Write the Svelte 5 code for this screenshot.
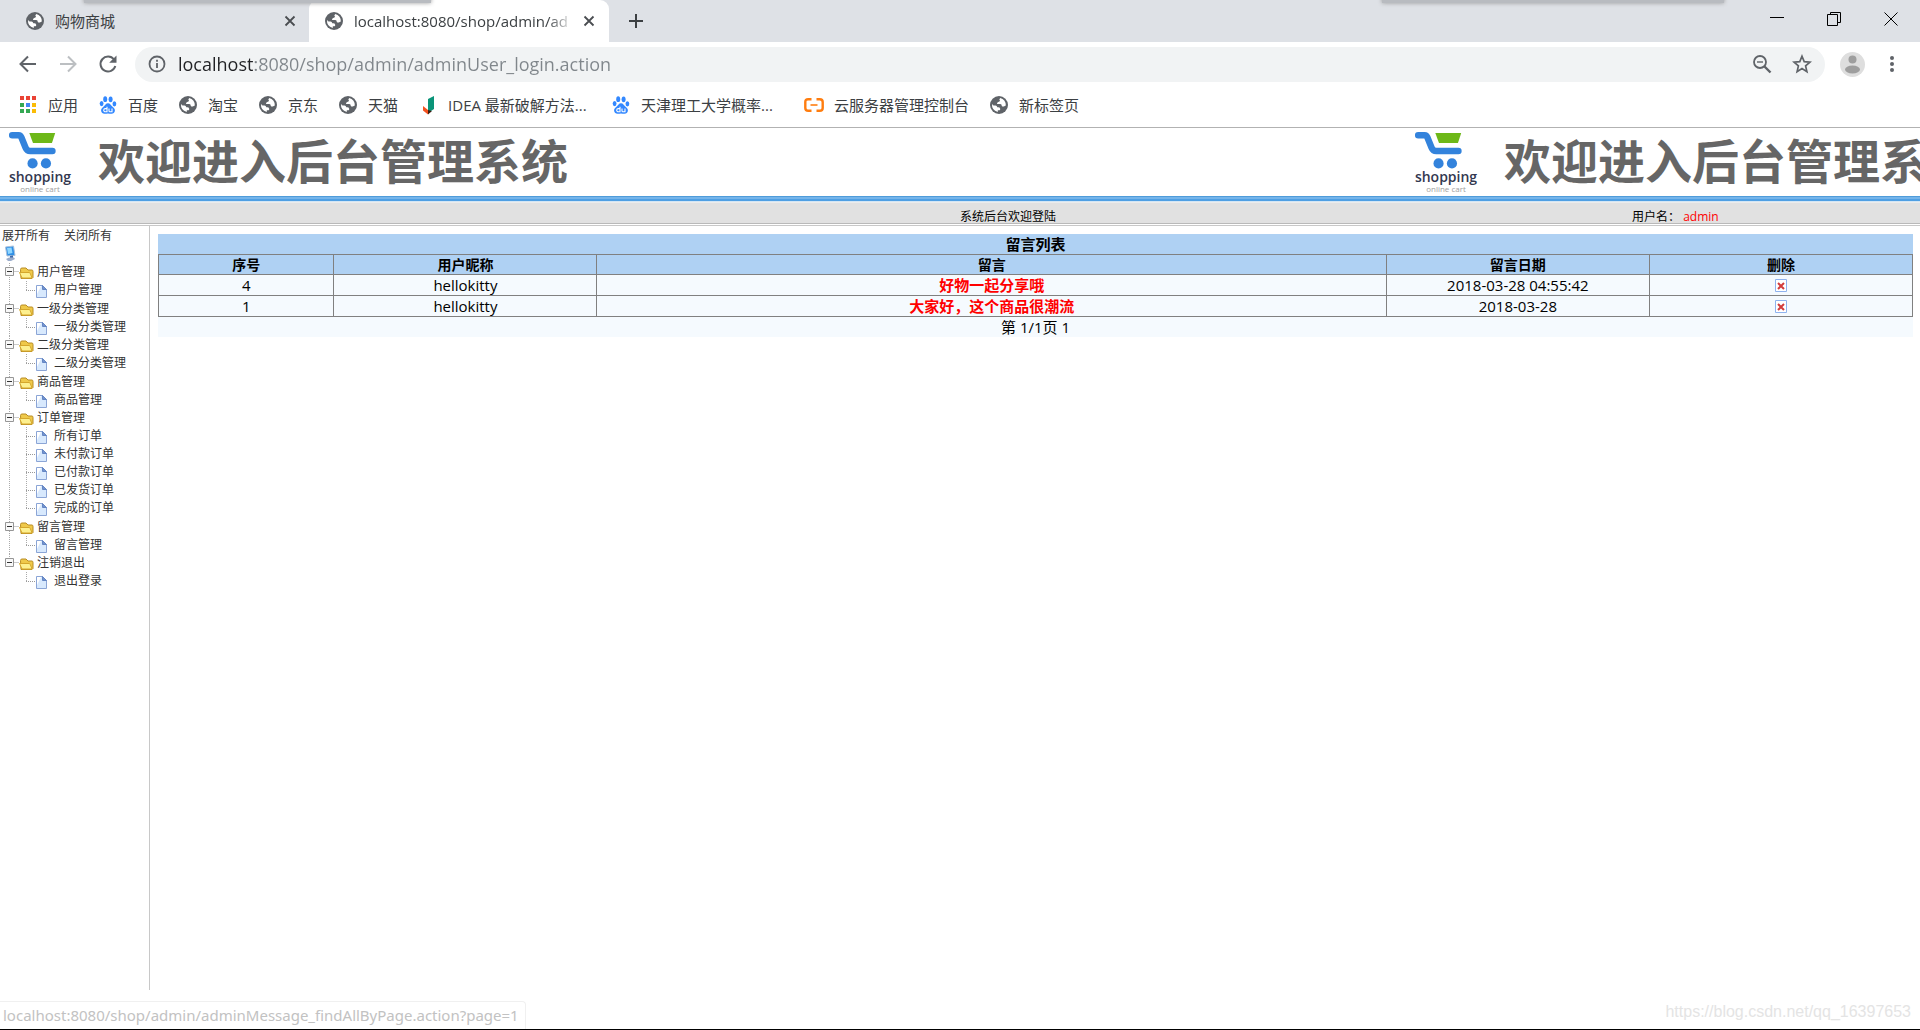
<script lang="ts">
	let url = $state('localhost:8080/shop/admin/adminUser_login.action');

	const bookmarks = [
		{ icon: 'apps', name: '应用' },
		{ icon: 'baidu', name: '百度' },
		{ icon: 'globe', name: '淘宝' },
		{ icon: 'globe', name: '京东' },
		{ icon: 'globe', name: '天猫' },
		{ icon: 'idea', name: 'IDEA 最新破解方法...', long: true },
		{ icon: 'baidu', name: '天津理工大学概率...', long: true },
		{ icon: 'aliyun', name: '云服务器管理控制台' },
		{ icon: 'globe', name: '新标签页' }
	];

	const menu = [
		{ name: '用户管理', items: ['用户管理'] },
		{ name: '一级分类管理', items: ['一级分类管理'] },
		{ name: '二级分类管理', items: ['二级分类管理'] },
		{ name: '商品管理', items: ['商品管理'] },
		{ name: '订单管理', items: ['所有订单', '未付款订单', '已付款订单', '已发货订单', '完成的订单'] },
		{ name: '留言管理', items: ['留言管理'] },
		{ name: '注销退出', items: ['退出登录'] }
	];

	let open = $state(menu.map(() => true));

	const messages = [
		{ id: 4, user: 'hellokitty', text: '好物一起分享哦', date: '2018-03-28 04:55:42' },
		{ id: 1, user: 'hellokitty', text: '大家好，这个商品很潮流', date: '2018-03-28' }
	];
</script>

{#snippet icon(name: string)}
	{#if name === 'globe'}
		<svg class="icon" viewBox="0 0 20 20">
			<circle cx="10" cy="10" r="9" fill="#5f6368" />
			<path d="M11.200 3q-1.700 1.500-.2 2.600-.2 1.400-1.800 1.400-1.300.4-1.200 1.900h3.200q1.700.2 1.600 2 .7 1 2 .5l2-.8A7 7 0 0 0 11.200 3zM3 9q-.5 6 5.800 8v-1.700h1.800q.8-.6.6-1.600-.4-1.400-2-1.400H8.300q-.3-1.900-1.800-1.900H4.500z" fill="#fff" />
		</svg>
	{:else if name === 'baidu'}
		<svg class="icon" viewBox="0 0 20 20" fill="#3388ff">
			<ellipse cx="7.200" cy="4.200" rx="2" ry="2.900" />
			<ellipse cx="12.600" cy="4.300" rx="2" ry="2.900" />
			<ellipse cx="3.600" cy="8.600" rx="1.900" ry="2.600" />
			<ellipse cx="16.400" cy="8.800" rx="1.900" ry="2.600" />
			<path d="M10 8.200c-2.200 0-2.900 2-4.300 3.200-1.600 1.300-2.800 2.400-2.600 4.400.2 2.100 1.800 3.100 3.600 3 1.300-.1 2.200-.4 3.300-.4s2 .3 3.300.4c1.800.1 3.400-.9 3.600-3 .2-2-1-3.100-2.600-4.400C12.900 10.200 12.200 8.200 10 8.200z" />
			<path d="M9 11.800v5H7.300a1.500 1.500 0 0 1 0-3.200H9M11 13.500v2.200c0 .7.400 1.100 1 1.100h2v-3.300" fill="none" stroke="#fff" stroke-width="1.100" />
		</svg>
	{:else if name === 'apps'}
		<svg class="icon" viewBox="0 0 20 20">
			<path d="M2 1h4v4H2zM8 1h4v4H8zM14 1h4v4h-4z" fill="#ea4335" />
			<path d="M2 8h4v4H2zM2 14h4v4H2zM8 14h4v4H8z" fill="#34a853" />
			<path d="M8 8h4v4H8z" fill="#4285f4" />
			<path d="M14 8h4v4h-4zM14 14h4v4h-4z" fill="#fbbc05" />
		</svg>
	{:else if name === 'idea'}
		<svg class="icon" viewBox="0 0 20 20">
			<path d="M10 4l6-3v13l-6 4z" fill="#0b9479" />
			<path d="M5 11l5 4v4.500l-5-4z" fill="#f4511e" />
			<path d="M10 15l4 1-4 3.500z" fill="#3a1d10" />
		</svg>
	{:else}
		<svg class="icon" viewBox="0 0 20 20" fill="none" stroke="#ff7d0f">
			<path d="M7.500 4.200H4.200Q1.300 4.200 1.300 7v6q0 2.800 2.900 2.800h3.300M12.500 4.200h3.300q2.900 0 2.900 2.800v6q0 2.800-2.900 2.800h-3.300" stroke-width="2.400" />
			<path d="M6.500 10h7" stroke-width="1.600" />
		</svg>
	{/if}
{/snippet}

{#snippet cross()}
	<svg class="cross" viewBox="0 0 12 12"><path d="M1.500 1.500l9 9M10.500 1.500l-9 9" stroke="#4a4d51" stroke-width="1.800" /></svg>
{/snippet}

{#snippet banner()}
	<div class="banner">
		<div class="logo">
			<svg viewBox="0 0 52 40">
				<path d="M22 1h28l-3.500 11H26z" fill="#6db818" />
				<path d="M3.500 3.500h7q2 0 3 2.500l4.500 11q1.500 3.500 5 3.500h24" fill="none" stroke="#3383dc" stroke-width="7" stroke-linecap="round" stroke-linejoin="round" />
				<circle cx="25.500" cy="34" r="5.500" fill="#3383dc" />
				<circle cx="40" cy="34" r="5.500" fill="#3383dc" />
			</svg>
			<strong>shopping</strong>
			<small>online cart</small>
		</div>
		<h1>欢迎进入后台管理系统</h1>
	</div>
{/snippet}

<div class="window">
	<header class="tabs">
		<div class="shade shade-left"></div>
		<div class="shade shade-right"></div>
		<div class="tab">
			{@render icon('globe')}
			<span class="tab-name">购物商城</span>
			<button aria-label="关闭标签页">{@render cross()}</button>
		</div>
		<div class="tab active">
			{@render icon('globe')}
			<span class="tab-name fade">localhost:8080/shop/admin/ad</span>
			<button aria-label="关闭标签页">{@render cross()}</button>
		</div>
		<button class="new-tab" aria-label="新标签页">
			<svg width="16" height="16" viewBox="0 0 16 16"><path d="M8 1v14M1 8h14" stroke="#3c4043" stroke-width="2" /></svg>
		</button>
		<div class="controls">
			<button aria-label="最小化"><svg viewBox="0 0 14 14"><path d="M0 5.500h14" /></svg></button>
			<button aria-label="还原"><svg viewBox="0 0 14 14"><path d="M.5 2.500h10v11H.5zM3.500 2.500v-2h10v10h-3" /></svg></button>
			<button aria-label="关闭"><svg viewBox="0 0 14 14"><path d="M.5.5l13 13M13.500.5l-13 13" /></svg></button>
		</div>
	</header>

	<div class="toolbar">
		<button class="nav" aria-label="后退">
			<svg width="20" height="20" viewBox="0 0 20 20"><path d="M18 10H3M10 2.500L2.500 10l7.500 7.500" stroke="#5f6368" /></svg>
		</button>
		<button class="nav" aria-label="前进">
			<svg width="20" height="20" viewBox="0 0 20 20"><path d="M2 10h15M10 2.500l7.500 7.500-7.500 7.500" stroke="#bcbfc2" /></svg>
		</button>
		<button class="nav" aria-label="刷新">
			<svg width="20" height="20" viewBox="0 0 20 20"><path d="M16 5.500A7.500 7.500 0 1 0 17.300 12" stroke="#5f6368" /><path d="M18.500 1.500v7.300h-7.300z" fill="#5f6368" /></svg>
		</button>
		<div class="address">
			<svg width="18" height="18" viewBox="0 0 18 18" fill="none" stroke="#5f6368" stroke-width="1.800"><circle cx="9" cy="9" r="7.500" /><path d="M9 8v5M9 4.800v2" /></svg>
			<input aria-label="地址" bind:value={url} />
			<button aria-label="缩放">
				<svg width="20" height="20" viewBox="0 0 20 20" fill="none" stroke="#5f6368" stroke-width="1.800"><circle cx="8" cy="8" r="6" /><path d="M12.500 12.500l6 6" stroke-width="2.400" /><path d="M5 8h6" stroke-width="1.400" /></svg>
			</button>
			<button aria-label="收藏">
				<svg width="20" height="20" viewBox="0 0 20 20" fill="none" stroke="#5f6368" stroke-width="1.700"><path d="M10 2.200l2.200 5.400 5.800.5-4.400 3.800 1.300 5.700-4.900-3-4.900 3 1.300-5.700L2 8.100l5.800-.5z" /></svg>
			</button>
		</div>
		<button class="avatar" aria-label="用户">
			<svg width="25" height="25" viewBox="0 0 25 25"><circle cx="12.500" cy="12.500" r="12.500" fill="#dedede" /><circle cx="12.500" cy="7.500" r="4" fill="#9e9e9e" /><ellipse cx="12.500" cy="17.500" rx="7.500" ry="4" fill="#9e9e9e" /></svg>
		</button>
		<button class="more" aria-label="菜单">
			<svg width="20" height="20" viewBox="0 0 20 20" fill="#5f6368"><circle cx="10" cy="4" r="2" /><circle cx="10" cy="10" r="2" /><circle cx="10" cy="16" r="2" /></svg>
		</button>
	</div>

	<nav class="bookmarks">
		{#each bookmarks as mark}
			<a href="#top">{@render icon(mark.icon)}<span class:long={mark.long}>{mark.name}</span></a>
		{/each}
	</nav>

	<div class="banners">
		{@render banner()}
		{@render banner()}
	</div>
	<div class="blue"></div>
	<div class="welcome">
		<span>系统后台欢迎登陆</span>
		<span class="login">用户名： <b>admin</b></span>
	</div>

	<div class="frames">
		<aside>
			<div class="toggle">
				<a href="#open" onclick={() => (open = menu.map(() => true))}>展开所有</a>
				<a href="#close" onclick={() => (open = menu.map(() => false))}>关闭所有</a>
			</div>
			<div class="root">
				<svg width="14" height="17" viewBox="0 0 14 17">
					<path d="M1.500 2L9.500 1l1.500 9.500-8 .5z" fill="#2f8fe6" stroke="#a9c0da" />
					<path d="M3 3l4.500-.5 1 5.500-4.500 1z" fill="#8fd6ff" />
					<path d="M6 11l3-.5v3H6z" fill="#3f68a8" />
					<path d="M2 14l3-1.500h5l1 1.500-4 2H4z" fill="#9aaccb" />
				</svg>
			</div>
			<ul>
				{#each menu as group, i}
					<li class="group">
						<button class="folder" onclick={() => (open[i] = !open[i])}>
							<svg width="36" height="18" viewBox="0 0 36 18">
								<path d="M13.500 8.500h5" stroke="#999" stroke-dasharray="1 1" />
								<path d="M5.500 4.500h8v8h-8z" fill="#f8f8f8" stroke="#969696" />
								<path d="M7 8.500h5" stroke="#333" />
								<path d="M20.500 6.500q0-1.500 1.500-1.500h4l2 2h4q1 0 1 1.500v6l-1 1H21z" fill="#efc94a" stroke="#b98d25" />
								<path d="M19.500 9.500h9.500q1 0 1.300 1l1.700 4.500H22z" fill="#fdf08f" stroke="#d5a72c" />
								{#if !open[i]}<path d="M9.500 6v5" stroke="#333" />{/if}
							</svg>
							<span>{group.name}</span>
						</button>
						{#if open[i]}
							<ul>
								{#each group.items as item}
									<li class="leaf">
										<a href="#page">
											<svg width="24" height="18" viewBox="0 0 24 18">
												<path d="M2 9.500h10" stroke="#999" stroke-dasharray="1 1" />
												<path d="M12.500 4.500h6l4 4v8h-10z" fill="#d8e9fd" stroke="#8ba5d6" />
												<path d="M13 5h4l-4 8z" fill="#fff" />
												<path d="M18.500 4.500v4h4z" fill="#7393cd" stroke="#6486c4" />
											</svg>
											<span>{item}</span>
										</a>
									</li>
								{/each}
							</ul>
						{/if}
					</li>
				{/each}
			</ul>
		</aside>

		<main>
			<table>
				<caption>留言列表</caption>
				<thead>
					<tr>
						<th class="w10">序号</th>
						<th class="w15">用户昵称</th>
						<th>留言</th>
						<th class="w15">留言日期</th>
						<th class="w15">删除</th>
					</tr>
				</thead>
				<tbody>
					{#each messages as message}
						<tr>
							<td>{message.id}</td>
							<td>{message.user}</td>
							<td class="message">{message.text}</td>
							<td>{message.date}</td>
							<td>
								<button aria-label="删除">
									<svg width="12" height="13" viewBox="0 0 12 13"><path d="M.5.5h11v12H.5z" fill="#fff" stroke="#8eb2ee" /><path d="M3 4l6 6M9 4l-6 6" stroke="#d23c3c" stroke-width="2" /></svg>
								</button>
							</td>
						</tr>
					{/each}
				</tbody>
			</table>
			<div class="pager">第 1/1页 1</div>
		</main>
	</div>

	<footer>
		<div class="status">localhost:8080/shop/admin/adminMessage_findAllByPage.action?page=1</div>
		<div class="watermark">https://blog.csdn.net/qq_16397653</div>
	</footer>
</div>

<style>
:global(body) {
	margin: 0;
	background: #fff;
}

.window {
	display: flex;
	flex-direction: column;
	min-height: 100vh;
	overflow: hidden;
	font-family: "Open Sans", "Noto Sans CJK SC", sans-serif;
	font-size: 15px;
	color: #000;
}

.window * {
	box-sizing: border-box;
}

button {
	display: flex;
	align-items: center;
	justify-content: center;
	padding: 0;
	border: 0;
	background: none;
	font: inherit;
	color: inherit;
}

a {
	color: inherit;
	text-decoration: none;
}

svg {
	display: block;
	flex: none;
}

.icon {
	width: 20px;
	height: 20px;
}

/* tab strip */
.tabs {
	position: relative;
	display: flex;
	height: 42px;
	background: #dee1e6;
	color: #3c4043;
}

.shade {
	position: absolute;
	top: -4px;
	height: 7px;
	background: #b8bbc0;
	box-shadow: 0 0 4px #999;
}

.shade-left {
	left: 84px;
	width: 347px;
}

.shade-right {
	right: 196px;
	width: 342px;
}

.tab {
	display: flex;
	align-items: center;
	width: 309px;
	padding: 0 11px 0 25px;
}

.tab.active {
	width: 300px;
	padding: 0 12px 0 15px;
	border-radius: 9px 9px 0 0;
	background: #fff;
}

.tab-name {
	flex: 1;
	margin: 0 7px 0 10px;
	line-height: 20px;
	white-space: nowrap;
}

.fade {
	mask-image: linear-gradient(90deg, #000 88%, transparent 100%);
}

.tab button {
	width: 16px;
	height: 20px;
}

.cross {
	width: 12px;
	height: 12px;
}

.new-tab {
	width: 54px;
}

.controls {
	display: flex;
	align-items: flex-start;
	gap: 43px;
	margin-left: auto;
	padding: 12px 22px 0 0;
}

.controls svg {
	width: 14px;
	height: 14px;
	fill: none;
	stroke: #000;
}

/* toolbar */
.toolbar {
	display: flex;
	align-items: center;
	height: 44px;
	padding: 0 18px;
}

.nav {
	width: 20px;
	margin-right: 20px;
}

.nav svg {
	fill: none;
	stroke-width: 2;
}

.nav:nth-child(3) {
	margin-right: 17px;
}

.address {
	display: flex;
	flex: 1;
	align-items: center;
	gap: 20px;
	height: 35px;
	padding: 0 13px;
	border-radius: 18px;
	background: #f1f3f4;
}

input {
	flex: 1;
	min-width: 0;
	margin-left: -8px;
	padding: 0;
	border: 0;
	outline: 0;
	font: inherit;
	font-size: 18px;
	/* host part is darker than the rest of the url */
	background: linear-gradient(90deg, #202124 77px, #80868b 77px);
	background-clip: text;
	color: transparent;
}

.avatar {
	margin: 0 17px 0 15px;
}

/* bookmarks */
.bookmarks {
	display: flex;
	align-items: center;
	gap: 20px;
	height: 42px;
	padding: 0 18px 4px;
	border-bottom: 1px solid #b2b2b2;
	color: #3c4043;
	line-height: 20px;
	white-space: nowrap;
}

.bookmarks a {
	display: flex;
	align-items: center;
	gap: 10px;
}

.long {
	width: 143px;
}

/* page banner, repeats along the window */
.banners {
	display: flex;
	height: 68px;
	overflow: hidden;
}

.banner {
	display: flex;
	flex: none;
	width: 1406px;
	padding-left: 8px;
}

.logo {
	display: flex;
	flex-direction: column;
	align-items: center;
	width: 64px;
	padding-top: 4px;
}

.logo svg {
	align-self: flex-start;
	width: 50px;
	height: 37px;
}

.logo strong {
	font-size: 14px;
	font-weight: 600;
	line-height: 16px;
	color: #33384f;
}

.logo small {
	font-size: 8px;
	line-height: 8px;
	color: #a0a0a0;
}

h1 {
	margin: 0 0 0 26px;
	font-size: 47px;
	line-height: 66px;
	font-weight: bold;
	color: #666;
	white-space: nowrap;
}

.blue {
	height: 7px;
	background: linear-gradient(#4f9cda 0 1px, #74b4ea 1px 3px, #4f9fe3 3px 5px, #d4e6f4 5px 6px, #ececec 6px 7px);
}

.welcome {
	display: grid;
	grid-template-columns: 50% 35% 15%;
	height: 21px;
	padding-top: 5px;
	border-bottom: 1px solid #b9b9b9;
	background: #e1e1e1;
	font-size: 12px;
	line-height: 18px;
	white-space: nowrap;
}

.welcome span {
	grid-column: 2;
	height: 15px;
}

.welcome .login {
	grid-column: 3;
	grid-row: 1;
}

.login b {
	font-weight: normal;
	color: #f00;
}

/* frames */
.frames {
	display: flex;
	flex: 1;
	margin-top: 1px;
	border-top: 1px solid #c8c8c8;
}

aside {
	width: 150px;
	padding-top: 1px;
	border-right: 1px solid #c8c8c8;
	font-size: 12px;
	line-height: 18px;
	color: #333;
}

.toggle {
	display: flex;
	gap: 14px;
	padding-left: 2px;
}

.root {
	height: 18px;
	padding-left: 4px;
}

ul {
	margin: 0;
	padding: 0;
	list-style: none;
}

.group {
	background: repeating-linear-gradient(#aaa 0 1px, transparent 1px 2px) 9px 0 / 1px 100% no-repeat;
}

.group:last-child {
	background-size: 1px 10px;
}

.group:nth-child(even) {
	padding-top: 1px;
}

.folder,
.leaf a {
	display: flex;
	gap: 1px;
	height: 18px;
	line-height: 18px;
}

.leaf {
	margin-left: 26px;
	background: repeating-linear-gradient(#aaa 0 1px, transparent 1px 2px) 0 0 / 1px 100% no-repeat;
}

.leaf:last-child {
	background-size: 1px 10px;
}

.leaf a {
	gap: 6px;
}

.leaf svg {
	margin-left: -2px;
}

main {
	flex: 1;
	padding: 8px 7px 0 8px;
}

table {
	width: 100%;
	border-collapse: collapse;
	table-layout: fixed;
	text-align: center;
}

caption {
	height: 20px;
	background: #afd1f3;
	font-weight: bold;
	line-height: 20px;
}

th,
td {
	height: 21px;
	padding: 0;
	border: 1px solid #808080;
	background: #f5fafe;
	line-height: 20px;
}

th {
	height: 20px;
	background: #afd1f3;
	font-size: 14px;
	line-height: 19px;
}

.w10 {
	width: 10%;
}

.w15 {
	width: 15%;
}

.message {
	font-weight: bold;
	color: #f00;
}

td button {
	margin: 0 auto;
}

.pager {
	height: 20px;
	background: #f5fafe;
	line-height: 20px;
	text-align: center;
}

footer {
	display: flex;
	justify-content: space-between;
	padding-top: 11px;
	border-bottom: 1px solid #000;
}

.status {
	height: 28px;
	padding: 0 6px 0 3px;
	border: 1px solid #f0f0f0;
	border-width: 1px 1px 0 0;
	border-radius: 0 4px 0 0;
	font-family: "Noto Sans", sans-serif;
	line-height: 27px;
	color: #c2c2c2;
}

.watermark {
	padding-right: 9px;
	font-family: "Liberation Sans", sans-serif;
	font-size: 16px;
	line-height: 22px;
	color: #e4e4e4;
}
</style>
